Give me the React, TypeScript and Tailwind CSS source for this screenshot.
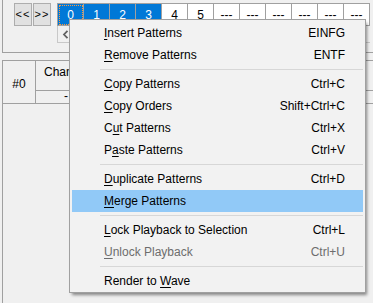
import React from 'react';

type Item =
  | { sep: true }
  | { sep?: false; pre: string; key: string; post: string; shortcut?: string; disabled?: boolean; active?: boolean };

// Context menu entries (access key split out so it can be underlined)
const menuItems: Item[] = [
  { pre: '', key: 'I', post: 'nsert Patterns', shortcut: 'EINFG' },
  { pre: '', key: 'R', post: 'emove Patterns', shortcut: 'ENTF' },
  { sep: true },
  { pre: '', key: 'C', post: 'opy Patterns', shortcut: 'Ctrl+C' },
  { pre: '', key: 'C', post: 'opy Orders', shortcut: 'Shift+Ctrl+C' },
  { pre: 'C', key: 'u', post: 't Patterns', shortcut: 'Ctrl+X' },
  { pre: 'P', key: 'a', post: 'ste Patterns', shortcut: 'Ctrl+V' },
  { sep: true },
  { pre: '', key: 'D', post: 'uplicate Patterns', shortcut: 'Ctrl+D' },
  { pre: '', key: 'M', post: 'erge Patterns', active: true },
  { sep: true },
  { pre: '', key: 'L', post: 'ock Playback to Selection', shortcut: 'Ctrl+L' },
  { pre: '', key: 'U', post: 'nlock Playback', shortcut: 'Ctrl+U', disabled: true },
  { sep: true },
  { pre: 'Render to ', key: 'W', post: 'ave' },
];

const orders = ['0', '1', '2', '3', '4', '5', '---', '---', '---', '---', '---', '---'];

const font = { fontFamily: '"Segoe UI", "Liberation Sans", Arial, sans-serif' };

export default function App() {
  return (
    <div className="relative w-[373px] h-[303px] overflow-hidden bg-[#f0f0f0] text-[12px] text-black" style={font}>
      {/* Order panel */}
      <div className="ml-[2px] h-[53px] border-l border-b border-[#a0a0a0] pt-[3px] flex">
        <div className="ml-[11px] flex h-[23px]">
          <button className="w-[18px] h-[23px] bg-[#e1e1e1] border border-[#adadad] text-[11px] leading-none tracking-[1px]">
            &lt;&lt;
          </button>
          <button className="w-[18px] h-[23px] ml-[1px] bg-[#e1e1e1] border border-[#adadad] text-[11px] leading-none tracking-[1px]">
            &gt;&gt;
          </button>
        </div>
        <div className="ml-[6px] flex flex-col">
          <div className="flex border-t border-l border-[#a0a0a0] h-[23px]">
            {orders.map((o, i) => (
              <div
                key={i}
                className={`w-[26px] shrink-0 border-r border-b border-[#a0a0a0] flex items-center justify-center ${
                  i < 4 ? 'bg-[#0078d7] text-white' : 'bg-white text-black'
                } ${i === 0 ? 'outline-1 outline-dotted outline-[#ff9a3c] -outline-offset-2' : ''}`}
              >
                {o}
              </div>
            ))}
          </div>
          <div className="h-[17px] border-l border-b border-[#c8c8c8] flex items-center pl-[4px] bg-[#f0f0f0]">
            <svg width="7" height="9" viewBox="0 0 7 9">
              <path d="M5.5 0.8 L2 4.5 L5.5 8.2" fill="none" stroke="#606060" strokeWidth="1.8" />
            </svg>
          </div>
        </div>
      </div>

      {/* Pattern table */}
      <div className="mt-[7px] ml-[2px] border-l border-t border-[#a0a0a0] h-[250px]">
        <div className="flex h-[43px] border-b border-[#a0a0a0]">
          <div className="w-[33px] border-r border-[#a0a0a0] flex items-center justify-center pt-[3px]">#0</div>
          <div className="flex-1 flex flex-col">
            <div className="h-[30px] border-b border-[#a0a0a0] pl-[8px] pt-[2px]">Channel 1</div>
            <div className="flex-1 pl-[28px] leading-[10px]">-</div>
          </div>
        </div>
      </div>

      {/* Context menu */}
      <div className="absolute left-[69px] top-[19px] w-[297px] bg-[#f2f2f2] border border-[#a0a0a0] pt-[2px] px-[2px] shadow-[2px_3px_3px_-1px_rgba(0,0,0,0.45)]">
        {menuItems.map((it, i) =>
          it.sep ? (
            <div key={i} className="h-[7px] flex items-center pl-[28px]">
              <div className="h-px w-full bg-[#d7d7d7]" />
            </div>
          ) : (
            <div
              key={i}
              className={`h-[22px] flex items-center justify-between pl-[32px] pr-[18px] ${
                it.active ? 'bg-[#91c9f7]' : ''
              } ${it.disabled ? 'text-[#6d6d6d]' : 'text-black'}`}
            >
              <span className="whitespace-pre">
                {it.pre}
                <u className="underline-offset-[2px]">{it.key}</u>
                {it.post}
              </span>
              {it.shortcut && <span>{it.shortcut}</span>}
            </div>
          )
        )}
      </div>
    </div>
  );
}
